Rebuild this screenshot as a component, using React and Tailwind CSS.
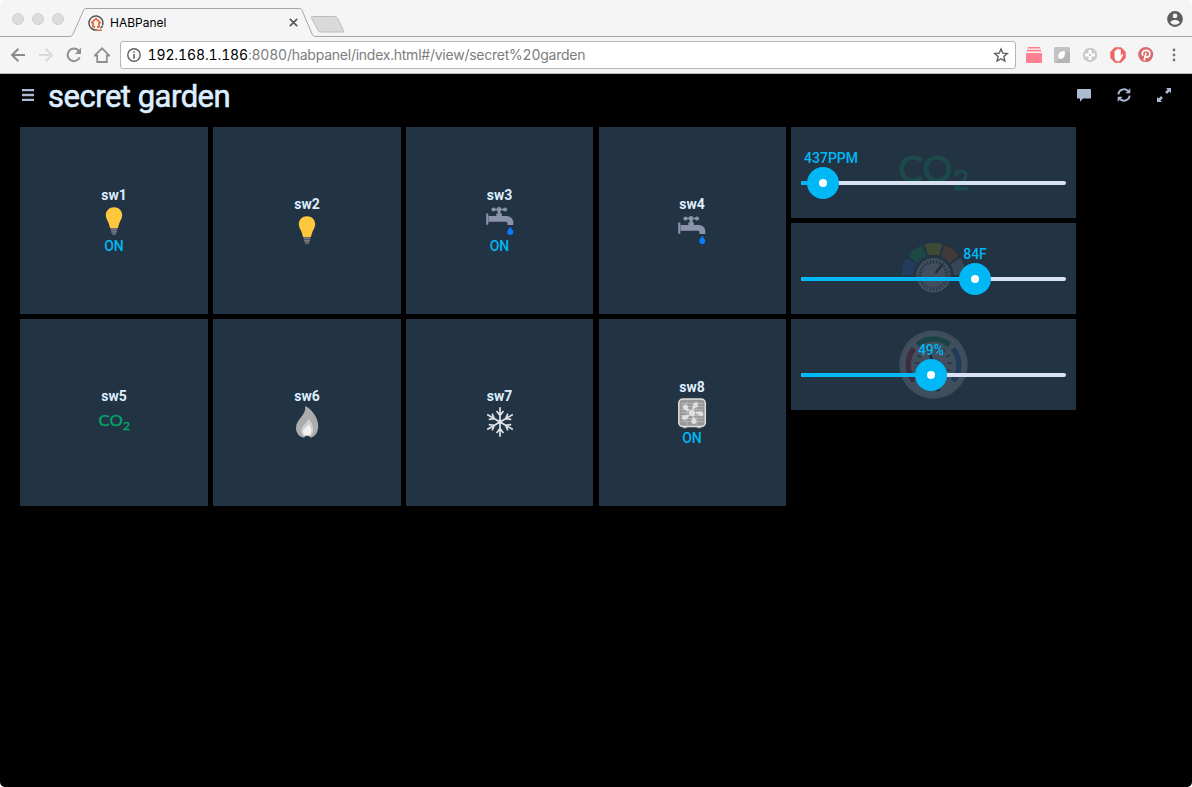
import React from "react";

function Bulb() {
  return (
    <svg className="h-8 w-8" viewBox="0 0 32 32">
      <path d="M16 2.200c-4.600 0-8.200 3.400-8.200 7.900 0 4 3 6.600 4.200 12.800h8c1.200-6.200 4.200-8.800 4.200-12.800 0-4.500-3.600-7.900-8.200-7.900z" fill="#ffc83c" />
      <path d="M12.700 23.300h6.600v2.200h-6.600zM13.200 26h5.600v1.800h-5.600zM14.200 28.300h3.600v1.500h-3.600z" fill="#7d7d80" />
    </svg>
  );
}

function Faucet() {
  return (
    <svg className="h-8 w-8" viewBox="0 0 32 32">
      <g fill="#8a93ab">
        <circle cx="9.500" cy="4.500" r="2.100" />
        <circle cx="15" cy="4.500" r="2.400" />
        <circle cx="21" cy="4.500" r="2.100" />
        <path d="M9 3.700h12v1.600H9zM13.700 6h2.800v3h-2.800zM12.300 8.600h5.600v3.400h-5.600z" />
        <path d="M4.500 11h17.600c4.600 0 7.200 2.600 7.200 6.600v2.300h-5.800v-1.400c0-1.200-.6-1.800-1.800-1.800H4.500z" />
        <path d="M2.200 8.500h2.100v11.200H2.200z" />
      </g>
      <path d="M26.300 21.800c1.400 2.300 3 3.700 3 5.300a3 3 0 0 1-6 0c0-1.600 1.600-3 3-5.300z" fill="#0a7cff" />
    </svg>
  );
}

function Co2({ className }) {
  return (
    <svg className={className} viewBox="0 0 32 32" fill="#05a568" stroke="#05a568" strokeWidth="0.400">
      <text x="0.500" y="20.400" fontSize="16.200" textLength="24.200" lengthAdjust="spacingAndGlyphs" className="font-['Lato',sans-serif]">CO</text>
      <text x="24.900" y="23.800" fontSize="12.200" className="font-['Lato',sans-serif]">2</text>
    </svg>
  );
}

function Flame() {
  return (
    <svg className="h-8 w-8" viewBox="0 0 32 32">
      <path d="M14.200 0c6 3 13 10.500 13 20.500 0 6-3.500 11-8.700 11.300h-4.500C8.500 31.500 5 27.500 5 21.800 5 13 15.500 9.500 14.200 0z" fill="#acacac" />
      <path d="M17.200 12.800c2.500 2.500 5 6.200 5 10.700 0 4.200-2 7-4.500 7h-3.200c-2.700 0-4.200-2.500-4.200-5.800 0-5.500 6.300-6.700 6.900-11.900z" fill="#d0d0d0" />
      <path d="M17.300 18.200c1.500 1.700 3.100 3.600 3.100 6.300 0 3-1.500 5.200-3.600 5.200-2.500 0-4.800-1.200-4.800-4.200 0-3.300 4.700-3.900 5.300-7.300z" fill="#f2f2f2" />
      <path d="M13 32c.5-1.700 1.900-2.200 3.200-2.200S19 30.300 19.500 32z" fill="#223344" />
    </svg>
  );
}

function Snowflake() {
  return (
    <svg className="h-8 w-8" viewBox="0 0 32 32" fill="none" stroke="#dfe3e8" strokeWidth="1.700">
      {[0, 60, 120, 180, 240, 300].map((a) => (
        <path key={a} transform={`rotate(${a} 16 16)`} d="M16 16V1.200M16 9.500l-3.400-4.500M16 9.500l3.400-4.500" />
      ))}
      <circle cx="16" cy="16" r="1.500" fill="#dfe3e8" />
    </svg>
  );
}

function Fan() {
  return (
    <svg className="h-8 w-8" viewBox="0 0 32 32">
      <path d="M7 29h4v2.200H7zM21 29h4v2.200h-4z" fill="#aaa" />
      <rect x="2.800" y="2" width="26.500" height="27.600" rx="4" fill="#989898" stroke="#dedede" strokeWidth="1.500" />
      <path d="M5 6.500h22M5 9.500h22M5 12.500h22M5 15.500h22M5 18.500h22M5 21.500h22M5 24.500h22M11 4v24M21 4v24" stroke="#b9b9b9" strokeWidth=".9" />
      <g fill="#dedede">
        <circle cx="16" cy="16" r="3.200" />
        {[15, 87, 159, 231, 303].map((a) => (
          <path key={a} transform={`rotate(${a} 16 16)`} d="M15.200 12.200C15.200 10 14.200 8.500 15 6.200c1.200-2.400 4.800-1.900 4.800 1 0 2.500-2.500 2.800-3 5z" />
        ))}
      </g>
    </svg>
  );
}

function TemperatureDial({ className }) {
  const ticks = Array.from({ length: 28 }, (_, i) => (i * 360) / 28);
  const segments = [
    [-74, "#2865c7"],
    [-37, "#089c4e"],
    [0, "#b5a700"],
    [37, "#bc5413"],
    [74, "#8f969f"],
  ];
  return (
    <svg className={className} viewBox="0 0 72 72">
      {segments.map(([angle, color]) => (
        <path key={angle} d="M29.300 18A26 26 0 0 1 43.700 18" transform={`rotate(${angle} 36.500 43)`} fill="none" stroke={color} strokeWidth="11.700" />
      ))}
      <circle cx="36.500" cy="43.300" r="17.200" fill="#b6bcc4" />
      {ticks.map((a) => (
        <path key={a} d="M36.500 28v3.400" transform={`rotate(${a} 36.500 43.300)`} stroke="#223344" strokeWidth="1.200" />
      ))}
      <path d="M38.500 41L46 31.500" stroke="#101820" strokeWidth="2.200" />
    </svg>
  );
}

function HumidityDial({ className }) {
  const ticks = [-110, -85, -60, -38, -15, 15, 38, 60, 85, 110];
  return (
    <svg className={className} viewBox="0 0 72 72">
      <circle cx="36.500" cy="36.500" r="34.200" fill="#b6bcc4" />
      <circle cx="36.500" cy="36.500" r="32.500" fill="none" stroke="#a0a8b0" strokeWidth="1" />
      <g fill="none" strokeWidth="5.500">
        <path d="M20.500 16.900A25 25 0 0 1 52.500 16.900" stroke="#008545" />
        <path d="M17 20.500A25.500 25.500 0 0 0 17 53" stroke="#a31c38" />
        <path d="M56 20.500A25.500 25.500 0 0 1 56 53" stroke="#1d5cb8" />
      </g>
      {ticks.map((a) => (
        <path key={a} d="M36.500 17.800v4.500" transform={`rotate(${a} 36.500 36.500)`} stroke="#223344" strokeWidth="1.300" />
      ))}
      <path d="M31 19l7 17-4 1z" fill="#050a10" />
      <path d="M37 61.500a4 4 0 0 0 7 0z" fill="#101820" />
    </svg>
  );
}

function Switch({ label, icon, on, className = "" }) {
  return (
    <div className={"flex flex-col items-center justify-center bg-[#223344] text-[14px] leading-5 " + (on ? "" : "pb-px ") + className}>
      <div className="font-bold text-[#ddeeff]">{label}</div>
      {icon}
      {on && <div className="-mt-px font-medium text-[#00b8f5]">ON</div>}
    </div>
  );
}

function Slider({ value, offset, icon }) {
  return (
    <div className="relative flex h-[91px] items-center justify-center bg-[#223344]">
      <div className="pr-px pb-px opacity-20">{icon}</div>
      <div className="absolute top-[54px] left-2.5 h-1 w-[265px] rounded-sm bg-[#d8e0f3]">
        <div className="h-1 rounded-sm bg-[#00b8f5]" style={{ width: offset }} />
        <div className="absolute -top-3.5 flex h-8 w-8 -translate-x-1/2 items-center justify-center rounded-full bg-[#00b8f5]" style={{ left: offset }}>
          <div className="h-2 w-2 rounded-full bg-white" />
        </div>
        <div className="absolute -top-[33px] -translate-x-1/2 text-[14px] leading-5 font-medium whitespace-nowrap text-[#00b8f5]" style={{ left: value === "437PPM" ? offset + 8 : offset }}>
          {value}
        </div>
      </div>
    </div>
  );
}

function TabStrip() {
  return (
    <div className="relative flex h-[37px] items-start">
      <svg className="absolute inset-0" width="1192" height="37" fill="none">
        <path d="M0 36.500H69C71.500 36.500 72.300 35.500 73 34L83.500 10.500C84 9.200 84.500 8.500 86 8.500H299C301 8.500 301.600 9.300 302.200 10.600L312 34C312.700 35.600 313.500 36.500 316 36.500H1192" stroke="#a6a6a6" />
        <path d="M312.500 16.500H334C336 16.500 337 17 337.700 18.500L343.500 30.500C344 31.700 343.500 32 342.500 32H321.500C319.500 32 318.500 31.500 317.900 30L311.500 18C311 17 311.500 16.500 312.500 16.500Z" fill="#d9d9d9" stroke="#bdbdbd" />
      </svg>
      <div className="mt-[13px] ml-3 flex gap-2">
        <div className="h-3 w-3 rounded-full border border-[#cfcfcf] bg-[#dcdcdc]" />
        <div className="h-3 w-3 rounded-full border border-[#cfcfcf] bg-[#dcdcdc]" />
        <div className="h-3 w-3 rounded-full border border-[#cfcfcf] bg-[#dcdcdc]" />
      </div>
      <svg className="mt-[15px] ml-6 h-4 w-4" viewBox="0 0 16 16" fill="none">
        <path d="M9 14.900A7 7 0 1 1 14.600 10" stroke="#555" strokeWidth="1.500" />
        <path d="M14.600 10.500A7 7 0 0 1 12.500 13.200" stroke="#555" strokeWidth="1.500" />
        <path d="M3.200 8.200L8 3.700l4.800 4.500M5 7.500v4.800M11 7.500v4.800M5.500 12h1.500M9 12h2" stroke="#e8693c" strokeWidth="1.800" />
        <path d="M9 15.200h5" stroke="#e8693c" strokeWidth="1.500" />
      </svg>
      <div className="mt-[13px] w-[184.5px] pl-1.5 font-['Inter',sans-serif] text-[12px] leading-5 text-black">HABPanel</div>
      <svg className="mt-[18px] h-[9px] w-[9px]" viewBox="0 0 9 9" stroke="#5a5a5a" strokeWidth="1.700">
        <path d="M.8.8l7.400 7.400M8.200.8L.8 8.200" />
      </svg>
      <svg className="mt-[11px] mr-[9px] ml-auto h-4 w-4" viewBox="0 0 16 16">
        <circle cx="8" cy="8" r="7.900" fill="#5e5e5e" />
        <circle cx="8" cy="4.900" r="2.300" fill="#f5f5f5" />
        <path d="M3.200 11.300C3.800 9.400 6.500 8.900 8 8.900s4.200.5 4.800 2.400C11.700 13 10 13.800 8 13.800s-3.700-.8-4.800-2.500z" fill="#f5f5f5" />
      </svg>
    </div>
  );
}

function Toolbar() {
  return (
    <div className="flex h-[37px] items-center border-b border-[#b9b9b9] bg-[#f5f5f5] pl-[10px]">
      <svg className="h-4 w-4" viewBox="0 0 16 16" fill="none" stroke="#8a8a8a" strokeWidth="1.900">
        <path d="M15 8H2.200M8.400 1.700L2 8l6.400 6.300" />
      </svg>
      <svg className="ml-3 h-4 w-4" viewBox="0 0 16 16" fill="none" stroke="#dadada" strokeWidth="1.900">
        <path d="M1 8h12.800M7.600 1.700L14 8l-6.400 6.300" />
      </svg>
      <svg className="ml-3 h-4 w-4" viewBox="0 0 16 16" fill="none">
        <path d="M13.700 10.400A6.300 6.300 0 1 1 12.600 3.600" stroke="#8f8f8f" strokeWidth="2" />
        <path d="M15 .8v6.200H8.900z" fill="#8f8f8f" />
      </svg>
      <svg className="ml-3 h-4 w-4" viewBox="0 0 16 16" fill="none" stroke="#8f8f8f" strokeWidth="1.800">
        <path d="M.6 8.700H3.200V15H12.800V8.700H15.400L8 1.300z" />
      </svg>
      <div className="ml-2.5 flex h-7 w-[896px] items-center rounded-[3px] border border-[#b5b5b5] bg-white pr-1.5 pl-[6px]">
        <svg className="h-[14px] w-[14px]" viewBox="0 0 14 14">
          <circle cx="7" cy="7" r="6.200" fill="none" stroke="#5f5f5f" strokeWidth="1.400" />
          <path d="M6.200 3.300h1.600v1.500H6.200zM6.200 6.100h1.600v4.700H6.200z" fill="#5f5f5f" />
        </svg>
        <div className="ml-[6.5px] flex-1 font-['Inter',sans-serif] text-[14px] leading-5 tracking-[-0.24px] text-[#7d7d7d] tabular-nums">
          <span className="tracking-[-0.12px] text-black">192.168.1.186</span>:8080/habpanel/index.html#/view/secret%20garden
        </div>
        <svg className="h-4 w-4" viewBox="0 0 16 16" fill="none" stroke="#5f5f5f" strokeWidth="1.400">
          <path d="M8 2l1.800 4.200 4.500.4-3.400 3 1 4.400L8 11.700 4.100 14l1-4.400-3.400-3 4.500-.4z" />
        </svg>
      </div>
      <div className="flex flex-1 items-center gap-3 pl-[10px]">
        <svg className="h-4 w-4" viewBox="0 0 16 16" fill="#ff8093">
          <path d="M2 0h12l.5 1.500h-13zM1.200 2.800h13.600l.5 1.700H.7zM0 6h16v9a1 1 0 0 1-1 1H1a1 1 0 0 1-1-1z" />
        </svg>
        <svg className="h-4 w-4" viewBox="0 0 16 16">
          <rect width="16" height="16" rx="1.500" fill="#c2c2c2" />
          <path d="M2 16L13 4l3 2v9l-1 1z" fill="#b4b4b4" />
          <path d="M4.200 9.500C4 6 6.500 3.800 10.500 4.200c1.200 3.600-.2 7.600-4 7.600-1.400 0-2.200-.8-2.300-2.300z" fill="#fff" />
        </svg>
        <svg className="h-4 w-4" viewBox="0 0 16 16">
          <circle cx="8" cy="8" r="7.200" fill="#c9c9c9" />
          <path d="M6.500 3h3v3.500H13v3H9.500V13h-3V9.500H3v-3h3.500z" fill="#fff" />
          <circle cx="8" cy="8" r="1.200" fill="#c9c9c9" />
        </svg>
        <svg className="h-4 w-4" viewBox="0 0 16 16">
          <path d="M4.900.3h6.200l4.600 4.600v6.200l-4.600 4.600H4.900L.3 11.100V4.900z" fill="#ef6461" />
          <path d="M4.500 9.500V4.300c0-1 1.500-1 1.500 0V3c0-1.100 1.600-1.100 1.600 0V2.400c0-1.100 1.600-1.100 1.600 0V3c0-1 1.600-1 1.600 0v6l1-1.600c.6-.8 1.700-.2 1.300.7L11 12c-.6 1.500-1.500 2.300-3.200 2.300C5.500 14.300 4.500 12.500 4.500 9.500z" fill="#fff" />
        </svg>
        <svg className="h-4 w-4" viewBox="0 0 16 16">
          <circle cx="7.700" cy="7.600" r="7.500" fill="#db6a6e" />
          <path d="M4.900 8.700C3.300 5.800 5 3.400 8 3.400c2.700 0 4.200 1.800 3.800 4-.4 2.500-2.800 3.500-4.300 2.200M8 5.800L6.200 13.500" fill="none" stroke="#fff" strokeWidth="1.700" />
        </svg>
        <svg className="h-4 w-4" viewBox="0 0 16 16" fill="#737373">
          <circle cx="8" cy="3" r="1.400" />
          <circle cx="8" cy="8" r="1.400" />
          <circle cx="8" cy="13" r="1.400" />
        </svg>
      </div>
    </div>
  );
}

function Header() {
  return (
    <div className="flex h-[53px] items-start pl-[22px]">
      <svg className="mt-[15px] h-3 w-3" viewBox="0 0 12 12" fill="#aabbd2">
        <path d="M0 0h12v2.300H0zM0 4.800h12v2.400H0zM0 9.700h12V12H0z" />
      </svg>
      <h1 className="mt-px ml-[14px] text-[31px] leading-[44px] font-normal tracking-[-0.5px] text-[#ddeeff] [-webkit-text-stroke:0.6px_#ddeeff]">secret garden</h1>
      <div className="mt-[14px] mr-[21px] ml-auto flex gap-[26px]">
        <svg className="h-[14px] w-[14px]" viewBox="0 0 14 14" fill="#aabbd2">
          <path d="M.8 1h12.400a.8.8 0 0 1 .8.800v7.900a.8.8 0 0 1-.8.800H6L3 13.800V10.500H.8a.8.800 0 0 1-.8-.8V1.800A.8.800 0 0 1 .8 1z" />
        </svg>
        <svg className="h-[14px] w-[14px]" viewBox="0 0 14 14" fill="none">
          <path d="M1.300 6.300A5.700 5.700 0 0 1 11 3M12.700 7.700A5.700 5.700 0 0 1 3 11" stroke="#aabbd2" strokeWidth="1.800" />
          <path d="M13.300.3v4.900H8.400zM.7 13.700V8.800h4.900z" fill="#aabbd2" />
        </svg>
        <svg className="h-[14px] w-[14px]" viewBox="0 0 14 14" fill="#aabbd2">
          <path d="M9 0h5v5l-1.600-1.600L9.900 5.900 8.100 4.100l2.500-2.500zM5 14H0V9l1.600 1.600 2.500-2.500 1.800 1.800-2.500 2.500z" />
        </svg>
      </div>
    </div>
  );
}

export default function App() {
  return (
    <div className="h-[787px] w-[1192px] bg-white font-['Roboto',sans-serif]">
      <div className="flex h-full flex-col overflow-hidden rounded-[5px] bg-[#f5f5f5]">
        <TabStrip />
        <Toolbar />
        <div className="flex-1 bg-black">
          <Header />
          <div className="flex gap-[5px] pl-5">
            <div className="grid grid-cols-[188px_188px_187px_188px] grid-rows-[187px_187px] gap-[5px]">
              <Switch label="sw1" icon={<Bulb />} on />
              <Switch label="sw2" icon={<Bulb />} />
              <Switch label="sw3" icon={<Faucet />} on />
              <Switch label="sw4" icon={<Faucet />} className="ml-px pr-px" />
              <Switch label="sw5" icon={<Co2 className="h-8 w-8" />} />
              <Switch label="sw6" icon={<Flame />} />
              <Switch label="sw7" icon={<Snowflake />} />
              <Switch label="sw8" icon={<Fan />} on className="ml-px pr-px" />
            </div>
            <div className="flex w-[285px] flex-col gap-[5px]">
              <Slider value="437PPM" offset={22} icon={<Co2 className="h-[72px] w-[72px]" />} />
              <Slider value="84F" offset={174} icon={<TemperatureDial className="h-[72px] w-[72px]" />} />
              <Slider value="49%" offset={130} icon={<HumidityDial className="h-[72px] w-[72px]" />} />
            </div>
          </div>
        </div>
      </div>
    </div>
  );
}
